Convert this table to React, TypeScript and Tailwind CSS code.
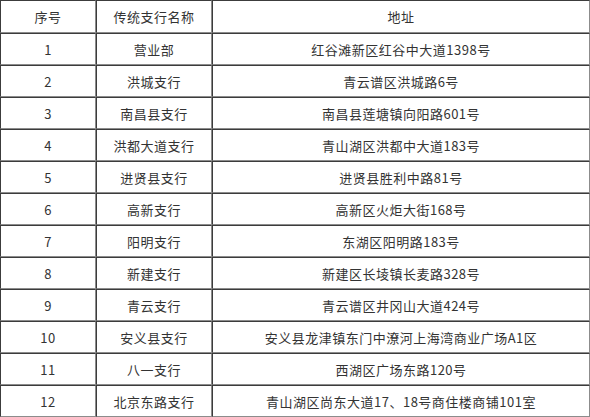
const rows: [string, string, string][] = [
  ["1", "营业部", "红谷滩新区红谷中大道1398号"],
  ["2", "洪城支行", "青云谱区洪城路6号"],
  ["3", "南昌县支行", "南昌县莲塘镇向阳路601号"],
  ["4", "洪都大道支行", "青山湖区洪都中大道183号"],
  ["5", "进贤县支行", "进贤县胜利中路81号"],
  ["6", "高新支行", "高新区火炬大街168号"],
  ["7", "阳明支行", "东湖区阳明路183号"],
  ["8", "新建支行", "新建区长堎镇长麦路328号"],
  ["9", "青云支行", "青云谱区井冈山大道424号"],
  ["10", "安义县支行", "安义县龙津镇东门中潦河上海湾商业广场A1区"],
  ["11", "八一支行", "西湖区广场东路120号"],
  ["12", "北京东路支行", "青山湖区尚东大道17、18号商住楼商铺101室"],
];

const cell =
  "border-t border-l border-r border-b border-t-[#3c3c3c] border-l-[#3c3c3c] border-r-[#8c8c8c] border-b-[#8c8c8c] p-0 text-center align-middle font-normal";

export default function App() {
  return (
    <div className="w-[590px] h-[417px] bg-white text-[#333] text-[13px] leading-none tracking-[0.5px] font-['Noto_Sans_CJK_SC','Liberation_Sans',sans-serif]">
      <table className="w-[590px] table-fixed border-separate border-spacing-0">
        <colgroup>
          <col className="w-[96px]" />
          <col className="w-[116px]" />
          <col />
        </colgroup>
        <thead>
          <tr className="h-[33px]">
            <th className={cell}>序号</th>
            <th className={cell}>传统支行名称</th>
            <th className={cell}>地址</th>
          </tr>
        </thead>
        <tbody>
          {rows.map(([no, name, addr]) => (
            <tr key={no} className="h-[32px]">
              <td className={cell}>{no}</td>
              <td className={cell}>{name}</td>
              <td className={cell}>{addr}</td>
            </tr>
          ))}
        </tbody>
      </table>
    </div>
  );
}
